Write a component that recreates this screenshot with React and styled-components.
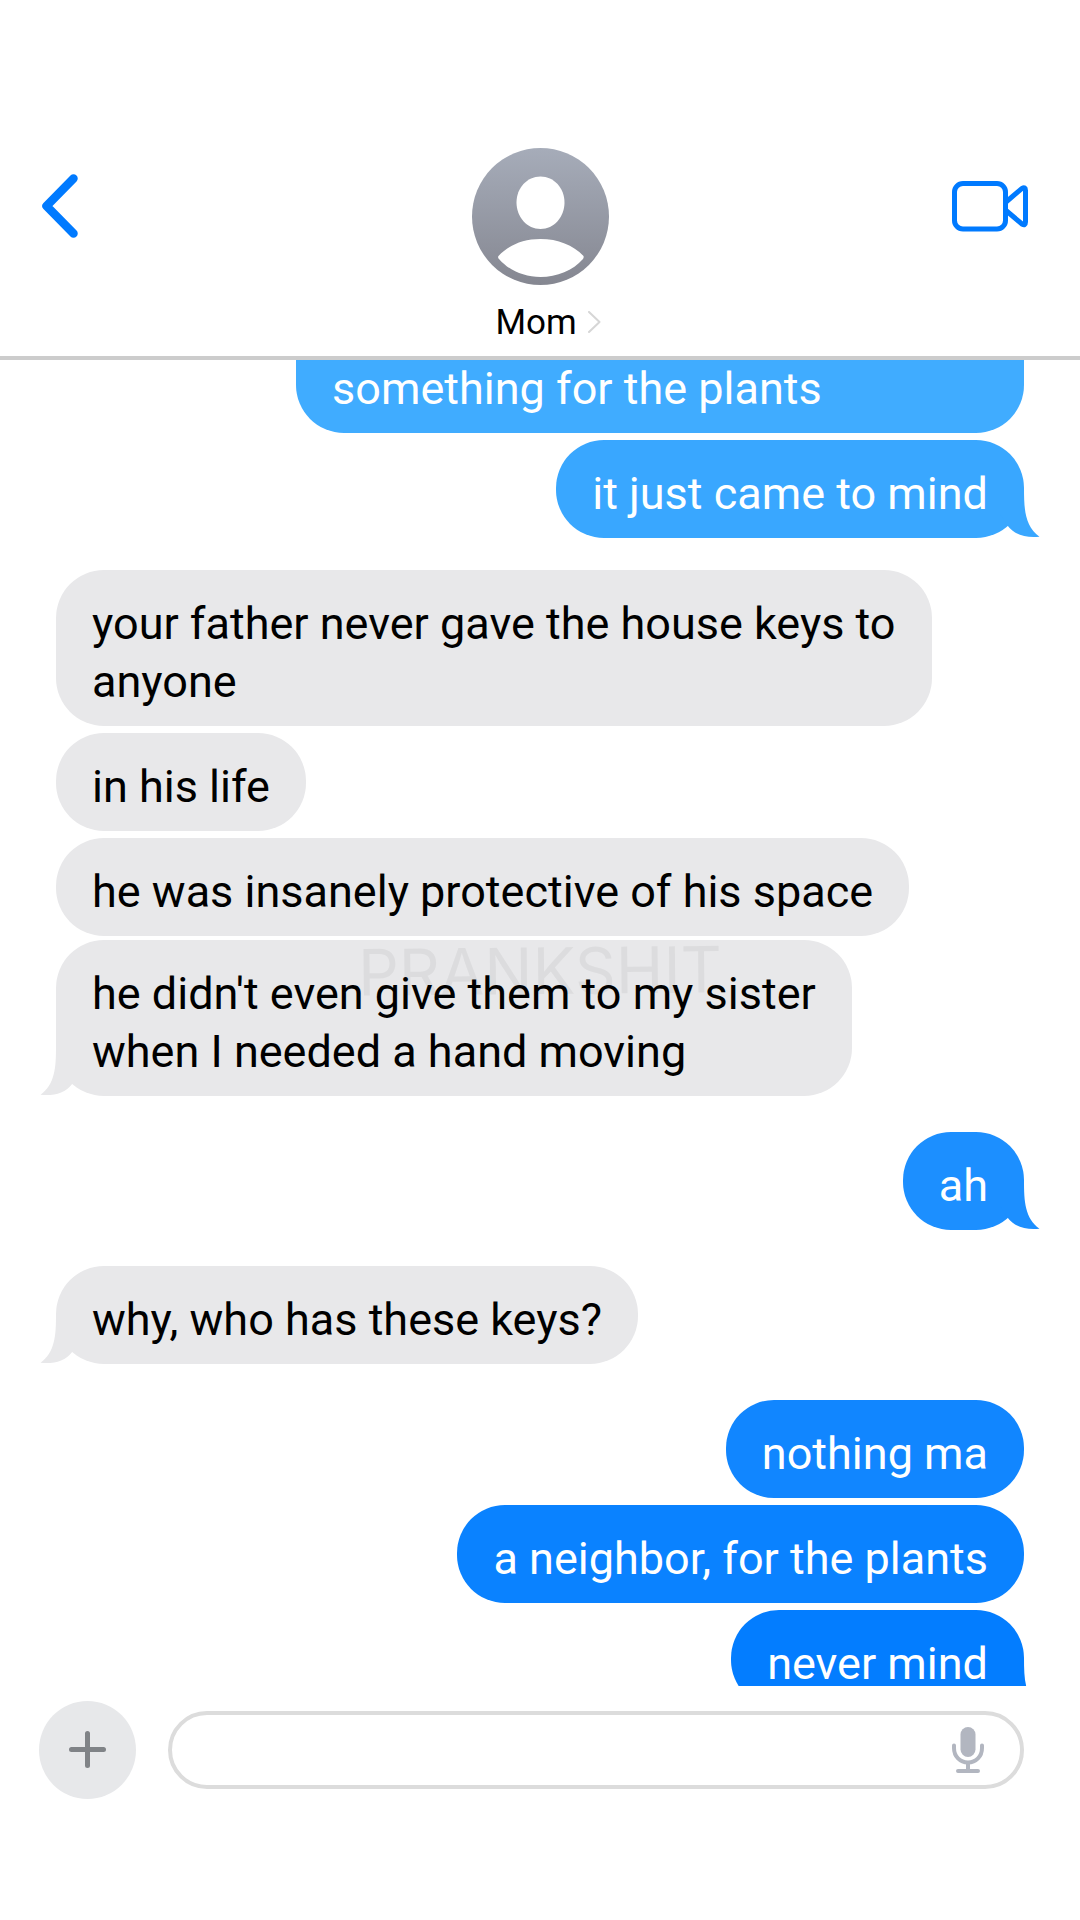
import React from 'react';
import styled, { createGlobalStyle } from 'styled-components';

const GlobalStyle = createGlobalStyle`
  * {
    box-sizing: border-box;
  }
  body {
    margin: 0;
    background: #ffffff;
    font-family: Roboto, "Liberation Sans", sans-serif;
  }
  button {
    padding: 0;
    border: 0;
    background: none;
    font: inherit;
    color: inherit;
    cursor: pointer;
  }
  svg {
    display: block;
  }
`

const Page = styled.div`
  display: flex;
  flex-direction: column;
  height: 100vh;
`

const Header = styled.header`
  display: grid;
  grid-template-columns: 1fr auto 1fr;
  align-items: start;
  flex: none;
  padding: 148px 42px 12px;
  border-bottom: 4px solid #cccccc;
`

const NavButton = styled.button`
  display: flex;
  align-items: center;
  height: 116px;
  color: #007aff;
  justify-self: ${props => props.$end ? 'end' : 'start'};
  padding-right: ${props => props.$end ? '10px' : '0'};
`

const Contact = styled.button`
  display: flex;
  flex-direction: column;
  gap: 17px;
`

const ContactName = styled.span`
  display: flex;
  align-items: center;
  gap: 10px;
  padding-left: 24px;
  font-size: 35px;
  line-height: 42px;
  color: #000000;
`

const Chat = styled.main`
  flex: 1;
  min-height: 0;
  overflow: hidden;
`

/* the thread is scrolled a little past its first lines */
const Thread = styled.ol`
  position: relative;
  display: flex;
  flex-direction: column;
  margin: -83px 0 0;
  padding: 0 56px;
  list-style: none;
`

const gaps = { tight: '4px', normal: '7px', turn: '32px', wide: '36px' }

const Bubble = styled.li`
  position: relative;
  align-self: ${props => props.$mine ? 'flex-end' : 'flex-start'};
  min-width: ${props => props.$full ? '75.2%' : '0'};
  margin-top: ${props => gaps[props.$gap] || '0'};
  padding: ${props => props.$full ? '83px' : '25px'} 36px 15px;
  border-radius: 48px;
  background: ${props => props.$color};
  color: ${props => props.$mine ? '#ffffff' : '#000000'};
  font-size: 45px;
  line-height: 58px;
  white-space: pre-line;
`

const TailShape = styled.svg`
  position: absolute;
  bottom: 0;
  ${props => props.$mine ? 'right: -16px;' : 'left: -16px; transform: scaleX(-1);'}
`

const Watermark = styled.li`
  position: absolute;
  top: 657px;
  left: 0;
  right: 0;
  text-align: center;
  font-family: Inter, sans-serif;
  font-size: 64px;
  line-height: 74px;
  color: rgba(0, 0, 0, 0.05);
  transform: rotate(-0.5deg);
  pointer-events: none;
`

const Composer = styled.form`
  display: flex;
  align-items: center;
  flex: none;
  gap: 32px;
  padding: 15px 56px 121px 39px;
`

const AddButton = styled.button`
  display: grid;
  place-items: center;
  flex: none;
  width: 97px;
  height: 98px;
  border-radius: 50%;
  background: #e7e8ea;
`

const Field = styled.div`
  display: flex;
  align-items: center;
  flex: 1;
  height: 78px;
  padding: 0 36px;
  border: 4px solid #dcdcdc;
  border-radius: 39px;
`

const TextInput = styled.input`
  flex: 1;
  min-width: 0;
  border: 0;
  outline: 0;
  background: none;
  font: inherit;
  font-size: 35px;
`

const messages = [
  { text: 'something for the plants', mine: true, color: '#40acff', full: true },
  { text: 'it just came to mind', mine: true, color: '#39a7ff', gap: 'normal', tail: true },
  { text: 'your father never gave the house keys to\nanyone', gap: 'turn' },
  { text: 'in his life', gap: 'normal' },
  { text: 'he was insanely protective of his space', gap: 'normal' },
  { text: "he didn't even give them to my sister\nwhen I needed a hand moving", gap: 'tight', tail: true },
  { text: 'ah', mine: true, color: '#1c8fff', gap: 'wide', tail: true },
  { text: 'why, who has these keys?', gap: 'wide', tail: true },
  { text: 'nothing ma', mine: true, color: '#1186ff', gap: 'wide' },
  { text: 'a neighbor, for the plants', mine: true, color: '#0a82ff', gap: 'normal' },
  { text: 'never mind', mine: true, color: '#037dff', gap: 'normal', tail: true },
]

const BackIcon = () => (
  <svg width="36" height="64" viewBox="0 0 36 64" fill="none" stroke="currentColor" strokeWidth="8.5" strokeLinecap="round" strokeLinejoin="round">
    <path d="M31.5 4.5L4.5 32L31.5 59.5" />
  </svg>
)

const VideoIcon = () => (
  <svg width="76" height="52" viewBox="0 0 76 52" fill="none" stroke="currentColor" strokeWidth="5" strokeLinejoin="round">
    <rect x="2.5" y="3.5" width="51" height="45.5" rx="8.5" />
    <path d="M54 22L70 8.4Q73.5 6.5 73.5 10.5V42Q73.5 46 70 44L54 30.5" />
  </svg>
)

const Avatar = () => (
  <svg width="137" height="137" viewBox="0 0 137 137">
    <defs>
      <linearGradient id="avatarFill" x1="0" y1="0" x2="0" y2="1">
        <stop offset="0" stopColor="#a6acb9" />
        <stop offset="1" stopColor="#858791" />
      </linearGradient>
    </defs>
    <circle cx="68.5" cy="68.5" r="68.5" fill="url(#avatarFill)" />
    <path d="M68.500 28.500C82 28.500 92.500 40 92.500 54.500S82 81 68.500 81S44.500 69 44.500 54.500S55 28.500 68.500 28.500Z" fill="#ffffff" />
    <path d="M26.500 108C37 97 51 91 68.500 91S101 97 111.500 108Q112 109.500 111 111C101 122.500 85 129 68.500 129S37 122.500 27 111Q25.500 109.500 26.500 108Z" fill="#ffffff" />
  </svg>
)

const DetailIcon = () => (
  <svg width="14" height="24" viewBox="0 0 14 24" fill="none" stroke="#d6d6d6" strokeWidth="2" strokeLinecap="round" strokeLinejoin="round">
    <path d="M2 1L12.500 11L2 21" />
  </svg>
)

const PlusIcon = () => (
  <svg width="38" height="38" viewBox="0 0 38 38" stroke="#808387" strokeWidth="5" strokeLinecap="round">
    <path d="M18.500 2.500V34.500M2.500 18.500H34.500" />
  </svg>
)

const MicIcon = () => (
  <svg width="32" height="46" viewBox="0 0 32 46" fill="none" stroke="#b2b6c0" strokeWidth="4" strokeLinecap="round">
    <rect x="8.500" y="0" width="15" height="30" rx="7.500" fill="#b2b6c0" stroke="none" />
    <path d="M2 18.500V21C2 29.500 8 35.500 16 35.500S30 29.500 30 21V18.500" />
    <path d="M16 36V43M6 44H26" />
  </svg>
)

const Tail = ({ mine, color }) => (
  <TailShape $mine={mine} width="40" height="50" viewBox="0 0 40 50" fill={color}>
    <path d="M24 0C24 22 25 38 39.500 48.800C26 50 15 47.500 7.500 37.500L0 26V0Z" />
  </TailShape>
)

const App = () => {
  return (
    <Page>
      <GlobalStyle />
      <Header>
        <NavButton type="button" aria-label="Back"><BackIcon /></NavButton>
        <Contact type="button">
          <Avatar />
          <ContactName>Mom <DetailIcon /></ContactName>
        </Contact>
        <NavButton type="button" aria-label="Video call" $end><VideoIcon /></NavButton>
      </Header>
      <Chat>
        <Thread>
          {messages.map(({ text, mine, color = '#e8e8ea', gap, full, tail }) => (
            <Bubble key={text} $mine={mine} $color={color} $gap={gap} $full={full}>
              {tail && <Tail mine={mine} color={color} />}
              {text}
            </Bubble>
          ))}
          <Watermark aria-hidden="true">PRANKSHIT</Watermark>
        </Thread>
      </Chat>
      <Composer onSubmit={event => event.preventDefault()}>
        <AddButton type="button" aria-label="Add attachment"><PlusIcon /></AddButton>
        <Field>
          <TextInput type="text" aria-label="Message" />
          <button type="button" aria-label="Dictate"><MicIcon /></button>
        </Field>
      </Composer>
    </Page>
  );
}

export default App;
